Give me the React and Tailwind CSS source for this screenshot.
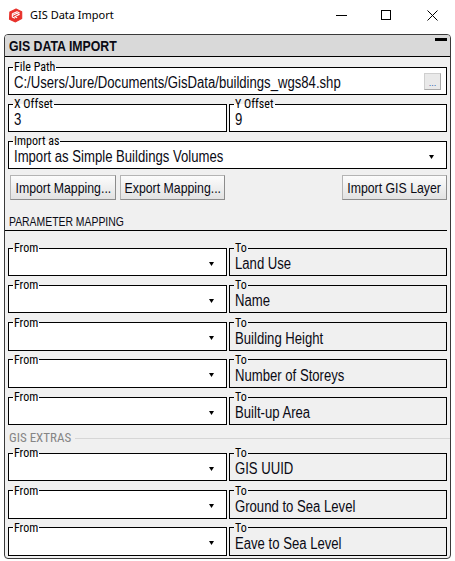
import React from "react";

function NT({ children, className = "origin-left" }) {
  return <span className={`inline-block scale-x-[0.82] whitespace-nowrap ${className}`}>{children}</span>;
}

function Arrow() {
  return (
    <svg width="5" height="4" viewBox="0 0 5 4" className="mb-[1px] shrink-0">
      <polygon points="0,0 5,0 2.5,4" fill="#000" />
    </svg>
  );
}

function Field({ label, gray, children, right = "pr-[12px]" }) {
  return (
    <fieldset
      className={`min-w-0 h-[34px] border border-black ${gray ? "bg-[#f0f0f0]" : "bg-white"}`}
    >
      <legend className="ml-[4px] px-[1px] font-['Roboto_Condensed','Liberation_Sans',sans-serif] text-[12px] leading-[12px] text-black">
        {label}
      </legend>
      <div className={`flex h-[20px] items-center justify-between pl-[5px] ${right} text-[16px] leading-[20px] text-[#0a0a14] whitespace-nowrap`}>
        {children}
      </div>
    </fieldset>
  );
}

function MapRow({ to }) {
  return (
    <div className="grid grid-cols-[219px_1fr] gap-[2px]">
      <Field label="From">
        <span />
        <Arrow />
      </Field>
      <Field label="To" gray>
        <NT>{to}</NT>
      </Field>
    </div>
  );
}

function Btn({ children, w }) {
  return (
    <button
      className={`${w} flex h-[25px] items-center justify-center border border-[#b4b4b4] border-r-[#8c8c8c] border-b-[#8c8c8c] bg-linear-to-b from-[#fcfcfc] to-[#e2e2e2] text-[15px] leading-[20px] text-[#0a0a14]`}
    >
      <NT className="origin-center">{children}</NT>
    </button>
  );
}

export default function App() {
  return (
    <div className="w-[455px] h-[561px] bg-white overflow-hidden font-['Liberation_Sans',Arial,sans-serif]">
      {/* Title bar */}
      <div className="flex h-[30px] items-center font-['Noto_Sans',sans-serif] text-[11px] text-black">
        <div className="pl-[8px]">
          <svg width="15" height="15" viewBox="0 0 16 16" className="block">
            <path d="M2 4.2 L8.6 1.2 L14.6 4 L14.6 11.2 L8 14.8 L1.6 12 Z" fill="#e8322c" stroke="#e8322c" strokeWidth="1.2" strokeLinejoin="round" />
            <path d="M4.6 6.2 L9.6 4 L12.4 5.3 M4.6 6.2 L4.6 9.6 L7.4 11 M4.6 7.9 L9.6 5.7 L12 6.9 L7.2 9.2 L9.8 10.4" fill="none" stroke="#fff" strokeWidth="1.1" strokeLinejoin="round" />
          </svg>
        </div>
        <span className="ml-[7px]">GIS Data Import</span>
        <div className="ml-auto flex h-full">
          <div className="flex w-[43px] items-center justify-center">
            <div className="h-[1px] w-[11px] bg-black" />
          </div>
          <div className="flex w-[46px] items-center justify-center">
            <div className="h-[10px] w-[10px] border border-black" />
          </div>
          <div className="flex w-[46px] items-center justify-center">
            <svg width="11" height="11" viewBox="0 0 11 11">
              <path d="M0.5 0.5 L10.5 10.5 M10.5 0.5 L0.5 10.5" stroke="#000" strokeWidth="1" />
            </svg>
          </div>
        </div>
      </div>

      {/* Panel */}
      <div className="mx-[4px] mt-[4px] overflow-hidden rounded-[4px] border border-[#3a3a3a] bg-[#f0f0f0]">
        <div className="flex h-[22px] items-start justify-between border-b border-black bg-[#d9d9d9]">
          <span className="pl-[4px] text-[15px] font-bold leading-[21px] text-[#0a0a14]">
            <NT>GIS DATA IMPORT</NT>
          </span>
          <div className="mr-[3px] mt-[3px] h-[3px] w-[12px] bg-black" />
        </div>

        <div className="flex flex-col px-[3px] pt-[4px] pb-[2px]">
          <Field label="File Path" right="pr-[5px]">
            <NT>C:/Users/Jure/Documents/GisData/buildings_wgs84.shp</NT>
            <div className="flex h-[17px] w-[17px] shrink-0 items-end justify-center self-start border border-[#cfcfcf] border-r-[#a8a8a8] border-b-[#a8a8a8] bg-[#e9e9e9] pb-[3px] text-[9px] leading-[6px] text-[#2d5fb0]">
              ...
            </div>
          </Field>

          <div className="mt-[3px] grid grid-cols-[219px_1fr] gap-[2px]">
            <Field label="X Offset">
              <NT>3</NT>
            </Field>
            <Field label="Y Offset">
              <NT>9</NT>
            </Field>
          </div>

          <div className="mt-[3px]">
            <Field label="Import as">
              <NT>Import as Simple Buildings Volumes</NT>
              <Arrow />
            </Field>
          </div>

          <div className="mt-[6px] flex items-center pl-[2px]">
            <Btn w="w-[106px]">Import Mapping...</Btn>
            <div className="ml-[4px]">
              <Btn w="w-[105px]">Export Mapping...</Btn>
            </div>
            <div className="ml-auto">
              <Btn w="w-[105px]">Import GIS Layer</Btn>
            </div>
          </div>

          <div className="-ml-[3px] mt-[15px] h-[16px] border-b border-black pl-[4px] text-[12.7px] leading-[15px] text-[#0a0a14]">
            <NT>PARAMETER MAPPING</NT>
          </div>

          <div className="mt-[11px] flex flex-col gap-[3.33px]">
            <MapRow to="Land Use" />
            <MapRow to="Name" />
            <MapRow to="Building Height" />
            <MapRow to="Number of Storeys" />
            <MapRow to="Built-up Area" />
          </div>

          <div className="mt-[5px] flex h-[16px] items-center">
            <span className="pl-[1px] font-['Roboto_Condensed','Liberation_Sans',sans-serif] text-[13px] leading-[16px] text-[#858585]">
              GIS EXTRAS
            </span>
            <div className="ml-[4px] mr-[-3px] h-0 flex-1 border-t border-[#d6d6d6]" />
          </div>

          <div className="mt-[1px] flex flex-col gap-[3.33px]">
            <MapRow to="GIS UUID" />
            <MapRow to="Ground to Sea Level" />
            <MapRow to="Eave to Sea Level" />
          </div>
        </div>
      </div>
    </div>
  );
}
